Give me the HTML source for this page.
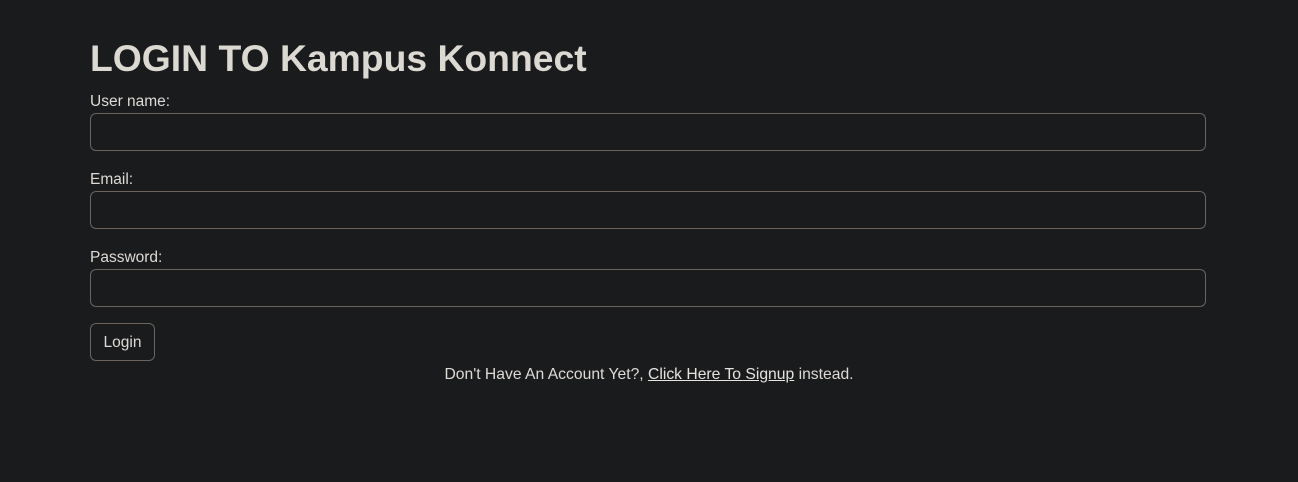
<!DOCTYPE html>
<html><head><style>
body{margin:0;background:#1a1b1d;font-family:"Liberation Sans",sans-serif;color:#dedad5;width:1298px;height:482px;overflow:hidden;position:relative}
h1{position:absolute;left:90px;top:35px;margin:0;font-size:37.3px;font-weight:bold;line-height:46px;color:#dcd8d2}
.l{position:absolute;left:90px;font-size:15.5px;line-height:20px}
.i{position:absolute;left:90px;width:1114px;height:36px;border:1px solid #6a645d;border-radius:6px;background:#1a1b1d}
.b{position:absolute;left:90px;top:323px;width:63px;height:36px;border:1px solid #6a645d;border-radius:6px;font-size:15.5px;line-height:38px;text-align:center}
.f{position:absolute;left:0;width:1298px;top:365px;text-align:center;font-size:15.7px;line-height:20px}
.f u{color:#e6e3de}
</style></head><body>
<h1>LOGIN TO Kampus Konnect</h1>
<div class="l" style="top:92px">User name:</div>
<div class="i" style="top:113px"></div>
<div class="l" style="top:170px">Email:</div>
<div class="i" style="top:191px"></div>
<div class="l" style="top:248px">Password:</div>
<div class="i" style="top:269px"></div>
<div class="b">Login</div>
<div class="f">Don't Have An Account Yet?, <u>Click Here To Signup</u> instead.</div>
</body></html>
